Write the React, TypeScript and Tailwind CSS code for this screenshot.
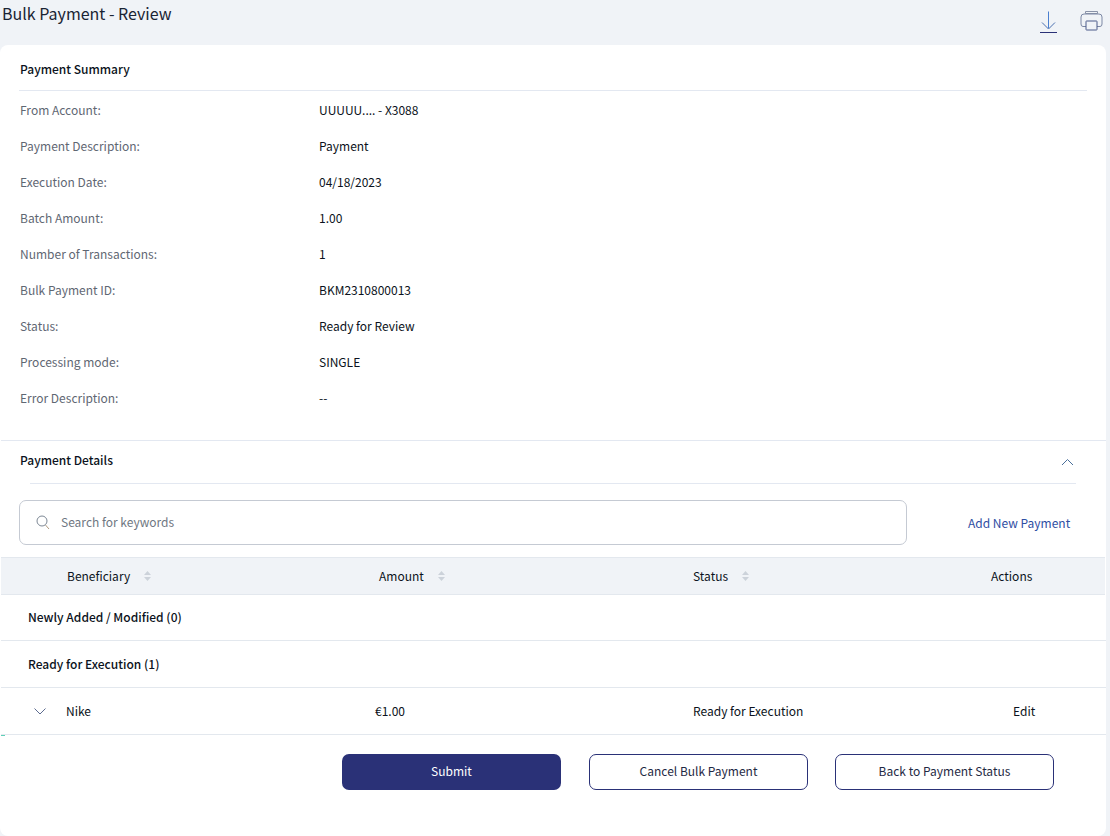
import React from "react";

const summary: [string, string][] = [
  ["From Account:", "UUUUU.... - X3088"],
  ["Payment Description:", "Payment"],
  ["Execution Date:", "04/18/2023"],
  ["Batch Amount:", "1.00"],
  ["Number of Transactions:", "1"],
  ["Bulk Payment ID:", "BKM2310800013"],
  ["Status:", "Ready for Review"],
  ["Processing mode:", "SINGLE"],
  ["Error Description:", "--"],
];

function Sort() {
  return (
    <svg width="9" height="12" viewBox="0 0 9 12" className="ml-[13px] shrink-0">
      <path d="M4.5 1 L8 5 H1 Z" fill="#ccd2da" />
      <path d="M4.5 11 L8 7 H1 Z" fill="#ccd2da" />
    </svg>
  );
}

export default function App() {
  return (
    <div className="h-[836px] w-[1110px] overflow-hidden bg-[#f0f3f7] text-[12px] text-[#0b1220] [font-family:'Noto_Sans_CJK_SC','Noto_Sans',sans-serif]">
      <header className="flex h-[45px] items-start justify-between">
        <h1 className="ml-[2px] mt-[1px] text-[16px] leading-[24px] text-[#1a2433]">Bulk Payment - Review</h1>
        <div className="mr-[7px] mt-[10px] flex items-start gap-[22px]">
          <svg width="18" height="24" viewBox="0 0 18 24" fill="none" stroke="#2a3177" strokeWidth="1">
            <path d="M8.5 1.5 V18" stroke="#4a7fd0" />
            <path d="M2 12.5 L8.5 19 L15 12.5" stroke="#4a6fb0" />
            <path d="M0 22.5 H17" />
          </svg>
          <svg width="23" height="22" viewBox="0 0 23 22" fill="none" stroke="#4b5a8a" strokeWidth="1">
            <path d="M5.5 1.5 H17.5 V3.5 H5.5 Z" stroke="#8a93a8" />
            <path d="M6 16.5 H3 Q1 16.5 1 14 V7 Q1 4 4 4 H19 Q22 4 22 7 V14 Q22 16.5 20 16.5 H17" stroke="#7c88a5" />
            <rect x="6" y="11" width="11" height="9" rx="0.5" />
          </svg>
        </div>
      </header>
      <main className="h-[791px] w-[1106px] rounded-[8px] bg-white">
        <section className="pl-[19px]">
          <h2 className="flex h-[46px] w-[1068px] items-center border-b border-[#e3e8f1] pl-[1px] pt-[2px] font-medium">Payment Summary</h2>
          <div className="pt-[1px]">
            {summary.map(([k, v]) => (
              <div key={k} className="flex h-[36px] items-center">
                <div className="w-[300px] pl-[1px] text-[#5f6773]">{k}</div>
                <div>{v}</div>
              </div>
            ))}
          </div>
        </section>
        <section className="ml-[1px] mt-[24px] border-t border-[#e3e8f1]">
          <div className="flex h-[42px] items-center justify-between pl-[19px] pr-[32px]">
            <h2 className="mb-[5px] font-medium">Payment Details</h2>
            <svg width="13" height="8" viewBox="0 0 13 8" fill="none" stroke="#4a6f9a" strokeWidth="1">
              <path d="M1 7 L6.5 1.5 L12 7" />
            </svg>
          </div>
          <div className="ml-[29px] w-[1046px] border-b border-[#e3e8f1]" />
          <div className="mt-[16px] flex items-center pl-[18px]">
            <div className="flex h-[45px] w-[888px] items-center rounded-[7px] border border-[#c5cad3] pl-[16px]">
              <svg width="14" height="15" viewBox="0 0 14 15" fill="none" stroke="#7c8794" strokeWidth="1">
                <circle cx="6" cy="6" r="5" />
                <path d="M9.5 10 L13 14" stroke="#b09a80" />
              </svg>
              <span className="mb-[2px] ml-[11px] text-[#6f7782]">Search for keywords</span>
            </div>
            <a className="ml-[61px] mt-[1px] text-[#2f4ea3]">Add New Payment</a>
          </div>
          <div className="mt-[12px] flex h-[38px] w-[1104px] items-center border-y border-[#e3e8ee] bg-[#f0f3f7]">
            <div className="flex w-[378px] items-center pl-[66px]">Beneficiary<Sort /></div>
            <div className="flex w-[314px] items-center">Amount<Sort /></div>
            <div className="flex w-[298px] items-center">Status<Sort /></div>
            <div>Actions</div>
          </div>
          <div className="flex h-[46px] items-center border-b border-[#e3e8ee] pb-[2px] pl-[27px] font-medium">Newly Added / Modified (0)</div>
          <div className="flex h-[47px] items-center border-b border-[#e3e8ee] pl-[27px] font-medium">Ready for Execution (1)</div>
          <div className="flex h-[47px] items-center border-b border-[#e3e8ee]">
            <div className="flex w-[374px] items-center pl-[33px]">
              <svg width="12" height="7" viewBox="0 0 12 7" fill="none" stroke="#5c6b8f" strokeWidth="1">
                <path d="M0.5 0.5 L6 6 L11.5 0.5" />
              </svg>
              <span className="ml-[20px]">Nike</span>
            </div>
            <div className="w-[318px]">€1.00</div>
            <div className="w-[320px]">Ready for Execution</div>
            <div>Edit</div>
          </div>
          <div className="h-[1px] w-[4px] bg-[#5fd0b8]" />
          <div className="mt-[18px] flex pl-[341px]">
            <button className="h-[36px] w-[219px] rounded-[7px] bg-[#2a3177] pb-[2px] text-white">Submit</button>
            <button className="ml-[28px] h-[36px] w-[219px] rounded-[7px] border border-[#2a3177] pb-[2px] text-[#1f2a44]">Cancel Bulk Payment</button>
            <button className="ml-[27px] h-[36px] w-[219px] rounded-[7px] border border-[#2a3177] pb-[2px] text-[#1f2a44]">Back to Payment Status</button>
          </div>
        </section>
      </main>
    </div>
  );
}
